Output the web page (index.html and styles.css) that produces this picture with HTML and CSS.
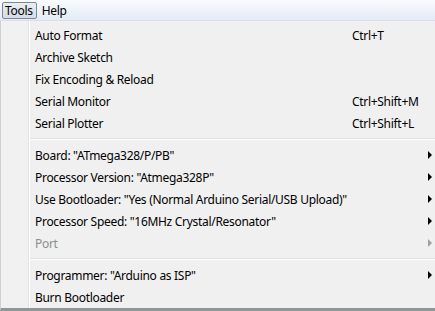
FILE: index.html
```html
<!DOCTYPE html>
<html lang="en">
<head>
    <meta charset="UTF-8">
    <title>Tools Menu</title>
    <link rel="stylesheet" href="styles.css">
</head>
<body>
    <div class="menubar">
        <span class="menubar-item active">Tools</span>
        <span class="menubar-item">Help</span>
    </div>
    <div class="menu">
        <div class="item"><span class="label">Auto Format</span><span class="shortcut">Ctrl+T</span></div>
        <div class="item"><span class="label">Archive Sketch</span></div>
        <div class="item"><span class="label">Fix Encoding &amp; Reload</span></div>
        <div class="item"><span class="label">Serial Monitor</span><span class="shortcut">Ctrl+Shift+M</span></div>
        <div class="item"><span class="label">Serial Plotter</span><span class="shortcut">Ctrl+Shift+L</span></div>
        <div class="separator"></div>
        <div class="item sub"><span class="label">Board: "ATmega328/P/PB"</span><span class="arrow"></span></div>
        <div class="item sub"><span class="label">Processor Version: "Atmega328P"</span><span class="arrow"></span></div>
        <div class="item sub"><span class="label">Use Bootloader: "Yes (Normal Arduino Serial/USB Upload)"</span><span class="arrow"></span></div>
        <div class="item sub"><span class="label">Processor Speed: "16MHz Crystal/Resonator"</span><span class="arrow"></span></div>
        <div class="item sub disabled"><span class="label">Port</span><span class="arrow"></span></div>
        <div class="separator"></div>
        <div class="item sub"><span class="label">Programmer: "Arduino as ISP"</span><span class="arrow"></span></div>
        <div class="item"><span class="label">Burn Bootloader</span></div>
    </div>
</body>
</html>
```

FILE: styles.css
```css
body {
    margin: 0;
    width: 435px;
    height: 311px;
    overflow: hidden;
    font-family: "Noto Sans", "Open Sans", sans-serif;
    font-size: 12px;
    letter-spacing: -0.3px;
    color: #000;
    background-color: #f0f0f0;
}

.menubar {
    height: 20px;
    display: flex;
    align-items: center;
    padding-left: 2px;
    background: linear-gradient(#f9fbfe, #e4ebf5);
    border-bottom: 1px solid #d8e0ea;
}

.menubar-item {
    padding: 0 4px;
    line-height: 15px;
    border: 1px solid transparent;
}

.menubar-item.active {
    padding: 0 3px 0 2px;
    background: linear-gradient(#e9edf2, #d5dce6);
    border: 1px solid #7a8a9d;
    border-radius: 2px;
}

.menu {
    height: 284px;
    padding-top: 3px;
    background: linear-gradient(to right, #f1f1f1 27px, #e2e3e3 27px, #e2e3e3 28px, #ffffff 28px, #ffffff 29px, #f0f0f0 29px);
    border-left: 1px solid #d0d0d0;
    border-bottom: 3px solid #8e9698;
}

.item {
    height: 22px;
    display: flex;
    align-items: center;
    padding-left: 34px;
    padding-right: 3px;
}

.label {
    flex: 1;
    white-space: nowrap;
}

.shortcut {
    width: 80px;
}

.arrow {
    width: 0;
    height: 0;
    border-top: 4px solid transparent;
    border-bottom: 4px solid transparent;
    border-left: 4px solid #000;
}

.disabled {
    color: #8d8d8d;
}

.disabled .arrow {
    border-left-color: #a0a0a0;
}

.separator {
    height: 10px;
    margin-left: 29px;
    background: linear-gradient(#f0f0f0 4px, #e0e0e0 4px, #e0e0e0 5px, #ffffff 5px, #ffffff 6px, #f0f0f0 6px);
}
```
